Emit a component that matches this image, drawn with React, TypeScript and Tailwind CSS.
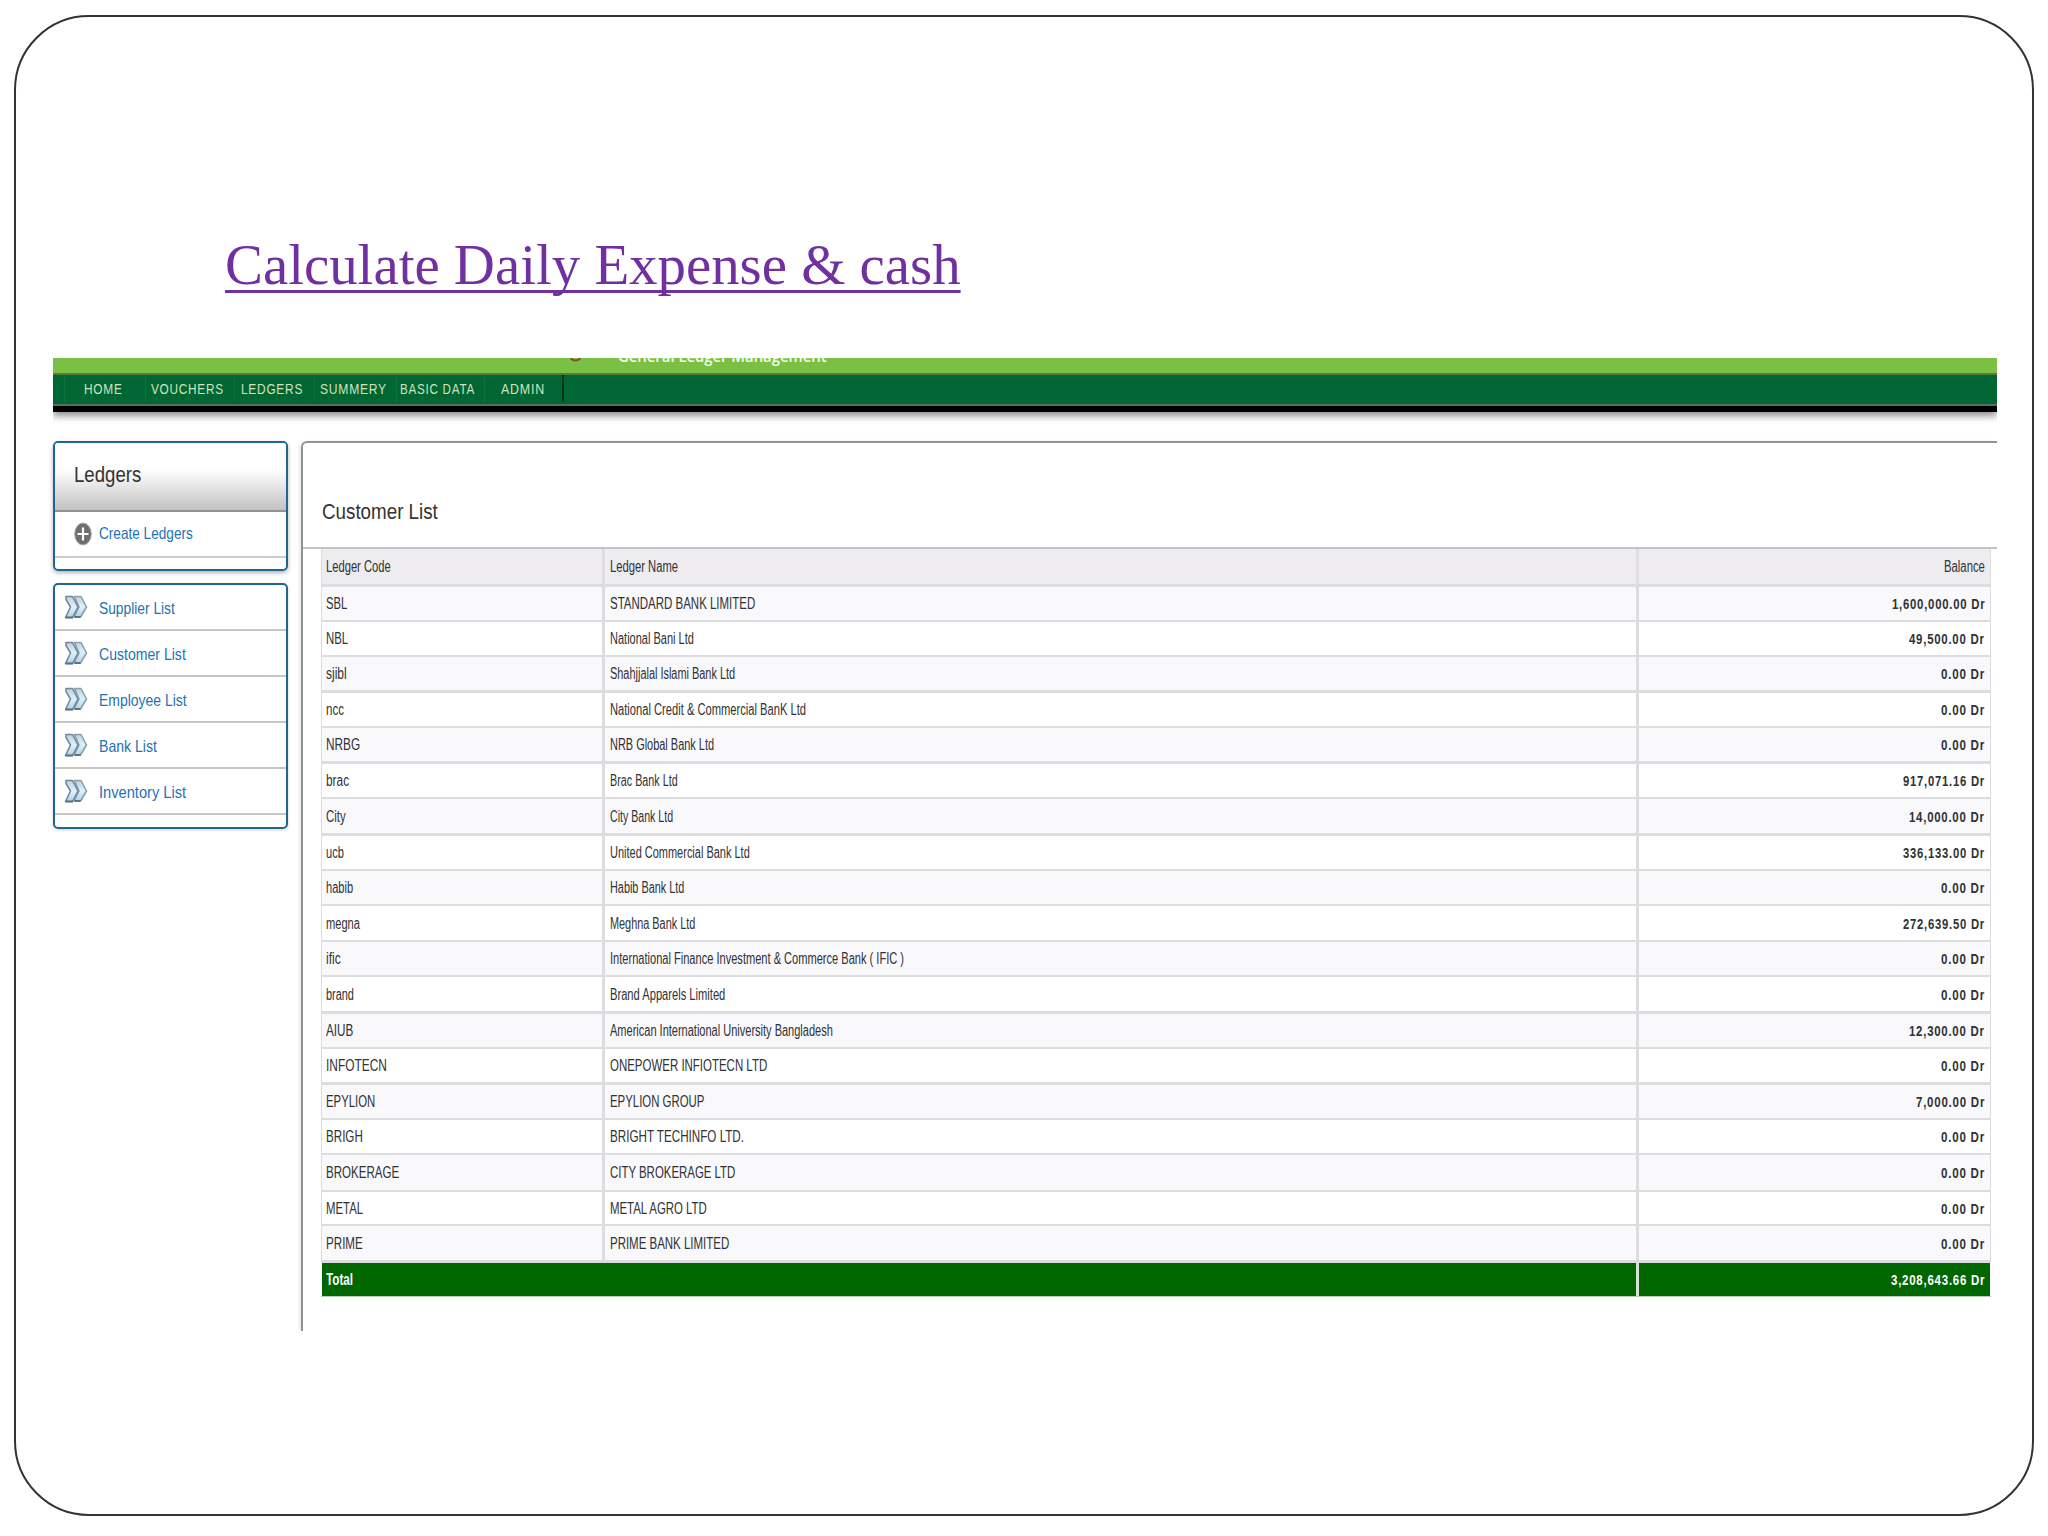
import { useLayoutEffect, useRef, useState } from 'react'
import type { ReactNode } from 'react'

const menu = [
    { label: 'HOME', width: 39, cell: 'w-[81px] pl-[19px]' },
    { label: 'VOUCHERS', width: 73, cell: 'w-[89px] pl-[5px]' },
    { label: 'LEDGERS', width: 62, cell: 'w-[80px] pl-[6px]' },
    { label: 'SUMMERY', width: 67, cell: 'w-[82px] pl-[5px]' },
    { label: 'BASIC DATA', width: 75, cell: 'w-[88px] pl-[3px]' },
    { label: 'ADMIN', width: 44, cell: 'w-[80px] pl-[16px]' },
]

const lists = [
    { label: 'Supplier List', width: 76 },
    { label: 'Customer List', width: 87 },
    { label: 'Employee List', width: 88 },
    { label: 'Bank List', width: 58 },
    { label: 'Inventory List', width: 87 },
]

type Cell = [string, number]

interface Ledger {
    code: Cell
    name: Cell
    balance: Cell
    row: string
}

const thin = 'h-[35px] border-b-2'
const thinTall = 'h-[36px] border-b-2'
const thick = 'h-[36px] border-b-3'
const thickTall = 'h-[37px] border-b-3'

const ledgers: Ledger[] = [
    { code: ['SBL', 21], name: ['STANDARD BANK LIMITED', 145], balance: ['1,600,000.00 Dr', 93], row: thin },
    { code: ['NBL', 22], name: ['National Bani Ltd', 84], balance: ['49,500.00 Dr', 76], row: thin },
    { code: ['sjibl', 21], name: ['Shahjjalal Islami Bank Ltd', 125], balance: ['0.00 Dr', 44], row: thick },
    { code: ['ncc', 18], name: ['National Credit & Commercial BanK Ltd', 196], balance: ['0.00 Dr', 44], row: thin },
    { code: ['NRBG', 34], name: ['NRB Global Bank Ltd', 104], balance: ['0.00 Dr', 44], row: thick },
    { code: ['brac', 23], name: ['Brac Bank Ltd', 68], balance: ['917,071.16 Dr', 82], row: thin },
    { code: ['City', 20], name: ['City Bank Ltd', 63], balance: ['14,000.00 Dr', 76], row: thickTall },
    { code: ['ucb', 18], name: ['United Commercial Bank Ltd', 140], balance: ['336,133.00 Dr', 82], row: thin },
    { code: ['habib', 27], name: ['Habib Bank Ltd', 74], balance: ['0.00 Dr', 44], row: thin },
    { code: ['megna', 34], name: ['Meghna Bank Ltd', 85], balance: ['272,639.50 Dr', 82], row: thinTall },
    { code: ['ific', 15], name: ['International Finance Investment & Commerce Bank ( IFIC )', 294], balance: ['0.00 Dr', 44], row: thin },
    { code: ['brand', 28], name: ['Brand Apparels Limited', 115], balance: ['0.00 Dr', 44], row: thickTall },
    { code: ['AIUB', 27], name: ['American International University Bangladesh', 223], balance: ['12,300.00 Dr', 76], row: thin },
    { code: ['INFOTECN', 61], name: ['ONEPOWER INFIOTECN LTD', 157], balance: ['0.00 Dr', 44], row: thick },
    { code: ['EPYLION', 49], name: ['EPYLION GROUP', 94], balance: ['7,000.00 Dr', 69], row: thin },
    { code: ['BRIGH', 37], name: ['BRIGHT TECHINFO LTD.', 134], balance: ['0.00 Dr', 44], row: thin },
    { code: ['BROKERAGE', 73], name: ['CITY BROKERAGE LTD', 125], balance: ['0.00 Dr', 44], row: 'h-[37px] border-b-2' },
    { code: ['METAL', 37], name: ['METAL AGRO LTD', 97], balance: ['0.00 Dr', 44], row: 'h-[34px] border-b-2' },
    { code: ['PRIME', 37], name: ['PRIME BANK LIMITED', 119], balance: ['0.00 Dr', 44], row: thickTall },
]

// Condenses a line of text so that it is exactly `width` pixels wide
function Fit({ width, className = '', children }: { width: number; className?: string; children: ReactNode }) {
    const ref = useRef<HTMLSpanElement>(null)
    const [scale, setScale] = useState(1)

    useLayoutEffect(() => {
        if (ref.current) setScale(width / ref.current.offsetWidth)
    }, [width])

    return (
        <span className="inline-block" style={{ width }}>
            <span
                ref={ref}
                className={`inline-block origin-left whitespace-nowrap ${className}`}
                style={{ transform: `scaleX(${scale})` }}
            >
                {children}
            </span>
        </span>
    )
}

function PlusIcon() {
    return (
        <svg className="w-[18px] h-[24px]" viewBox="0 0 18 24" preserveAspectRatio="none">
            <ellipse cx="9" cy="12" rx="8.3" ry="11" fill="#6f6f6f" stroke="#a9a9a9" />
            <path d="M9 5.5v13M3.5 12h11" stroke="#fff" strokeWidth="2.2" />
        </svg>
    )
}

function ArrowsIcon() {
    return (
        <svg className="w-[24px] h-[24px] -mt-[2px]" viewBox="0 0 24 24">
            <defs>
                <linearGradient id="arrow" x1="0" y1="0" x2="0" y2="1">
                    <stop offset="0" stopColor="#c3cfd8" />
                    <stop offset="0.5" stopColor="#dcf1fd" />
                    <stop offset="1" stopColor="#b0d3e8" />
                </linearGradient>
            </defs>
            <g fill="url(#arrow)" strokeWidth="1.6" strokeLinejoin="round">
                <path d="M10.5 1.5h6.500l5.500 10.500-6 10h-6.500l5-10z" stroke="#8b9fad" />
                <path d="M2 1.500h6.500l5.500 10.500-5.500 10.500h-7l5-10.500-4.500-7.500z" stroke="#74899a" />
            </g>
            <path d="M1.500 22.500h7.500M10.500 22h6" stroke="#5a7486" strokeWidth="1.800" />
        </svg>
    )
}

function Header() {
    return (
        <header className="w-full shadow-[0_4px_7px_#00000070] [clip-path:inset(0_0_-12px_0)]">
            <div className="flex h-[15px] overflow-hidden bg-[#7ac143]">
                <svg className="ml-[516px] w-[13px] h-[4px]" viewBox="0 0 13 4">
                    <path d="M1.5 -1c1 4.500 9 4.500 10 0" fill="none" stroke="#7b5535" strokeWidth="2" />
                </svg>
                <div className="ml-[36px] -mt-[14px] h-[24px] leading-[24px] text-[16px] font-semibold text-[#f4fbea] font-['Open_Sans',sans-serif]">
                    <Fit width={209}>General Ledger Management</Fit>
                </div>
            </div>
            <nav className="flex h-[33px] pl-[11px] pb-[2px] border-t-2 border-b-2 border-t-[#5b7748] border-b-[#52705e] bg-[#006633] text-[#d3e2bd]">
                {menu.map((item) => (
                    <a
                        key={item.label}
                        href="#"
                        className={`flex items-center shrink-0 border-l border-[#0b743d] text-[15.500px] leading-none tracking-[1px] first:ml-0 last:border-r-2 last:border-r-[#0b3316] ${item.cell}`}
                    >
                        <Fit width={item.width}>{item.label}</Fit>
                    </a>
                ))}
            </nav>
            <div className="h-[6px] bg-black" />
        </header>
    )
}

function Sidebar() {
    return (
        <aside className="w-[235px] shrink-0 text-[#2273b5] text-[16.500px] leading-none">
            <div className="h-[130px] rounded-[5px] border-2 border-[#1f6791] overflow-hidden shadow-[0_2px_4px_#0000004d]">
                <h2 className="flex items-center h-[69px] pl-[19px] pb-[2px] border-b-2 border-[#929292] bg-linear-to-b from-white from-40% to-[#c2c2c3] text-[22.500px] text-[#333]">
                    <Fit width={67}>Ledgers</Fit>
                </h2>
                <a href="#" className="flex items-center h-[46px] pl-[19px] pb-px border-b-2 border-[#cbcbcb]">
                    <PlusIcon />
                    <span className="ml-[7px]">
                        <Fit width={94}>Create Ledgers</Fit>
                    </span>
                </a>
            </div>
            <div className="mt-[12px] h-[246px] rounded-[5px] border-2 border-[#1f6791] overflow-hidden shadow-[0_1px_3px_#00000030]">
                {lists.map((item) => (
                    <a
                        key={item.label}
                        href="#"
                        className="flex items-center h-[46px] pl-[9px] pt-[2px] border-b-2 border-[#c6c6c6]"
                    >
                        <ArrowsIcon />
                        <span className="ml-[11px]">
                            <Fit width={item.width}>{item.label}</Fit>
                        </span>
                    </a>
                ))}
            </div>
        </aside>
    )
}

function Row({ ledger, striped }: { ledger: Ledger; striped: boolean }) {
    return (
        <div className={`flex border-[#dddcde] ${ledger.row} ${striped ? 'bg-[#f9f8fb]' : 'bg-white'}`}>
            <div className="flex items-center w-[283px] pl-[4px] pt-px border-r-3 border-[#dddcde]">
                <Fit width={ledger.code[1]}>{ledger.code[0]}</Fit>
            </div>
            <div className="flex items-center w-[1034px] pl-[5px] pt-px border-r-3 border-[#dddcde]">
                <Fit width={ledger.name[1]}>{ledger.name[0]}</Fit>
            </div>
            <div className="flex items-center justify-end flex-1 pr-[5px] text-[15px] font-bold tracking-[1px]">
                <Fit width={ledger.balance[1]}>{ledger.balance[0]}</Fit>
            </div>
        </div>
    )
}

function LedgerTable() {
    return (
        <div className="ml-[18px] w-[1670px] text-[16px] leading-none text-[#303236]">
            <div className="border-x border-[#dddcde]">
                <div className="flex h-[38px] border-b-3 border-[#dddcde] bg-[#eeecef]">
                    <div className="flex items-center w-[283px] pl-[4px] pt-px border-r-3 border-[#dddcde]">
                        <Fit width={65}>Ledger Code</Fit>
                    </div>
                    <div className="flex items-center w-[1034px] pl-[5px] pt-px border-r-3 border-[#dddcde]">
                        <Fit width={68}>Ledger Name</Fit>
                    </div>
                    <div className="flex items-center justify-end flex-1 pr-[5px] pt-px">
                        <Fit width={41}>Balance</Fit>
                    </div>
                </div>
                {ledgers.map((ledger, i) => (
                    <Row key={ledger.code[0]} ledger={ledger} striped={i % 2 === 0} />
                ))}
            </div>
            <div className="flex h-[34px] pl-px pr-px border-b border-[#b9cdb9] text-white font-bold">
                <div className="flex items-center w-[1317px] pl-[4px] border-r-3 border-[#d5e4d5] bg-[#006600]">
                    <Fit width={27}>Total</Fit>
                </div>
                <div className="flex items-center justify-end flex-1 pr-[5px] bg-[#006600] text-[15px] tracking-[1px]">
                    <Fit width={94}>3,208,643.66 Dr</Fit>
                </div>
            </div>
        </div>
    )
}

export default function App() {
    return (
        <div className="w-[2048px] h-[1536px] overflow-hidden bg-white pt-[15px] pl-[14px] font-['Liberation_Sans',sans-serif]">
            <main className="w-[2020px] h-[1501px] rounded-[75px] border-2 border-[#333]">
                <h1 className="mt-[220px] ml-[209px] h-[121px] text-[56px] leading-none text-[#7030a0] font-['Liberation_Serif',serif]">
                    <Fit
                        width={736}
                        className="underline decoration-[3px] underline-offset-[6px] [text-decoration-skip-ink:none]"
                    >
                        Calculate Daily Expense &amp; cash
                    </Fit>
                </h1>
                <div className="ml-[37px] w-[1944px]">
                    <Header />
                    <div className="flex mt-[29px]">
                        <Sidebar />
                        <section className="ml-[13px] flex-1 h-[890px] border-t-2 border-l-2 border-[#929292] rounded-tl-[6px] shadow-[-2px_0_3px_#00000014] [clip-path:inset(-4px_0_0_-6px)]">
                            <h2 className="flex h-[106px] pl-[19px] pt-[58px] border-b-2 border-[#c3c2c5] text-[22.500px] leading-none text-[#333]">
                                <Fit width={116}>Customer List</Fit>
                            </h2>
                            <LedgerTable />
                        </section>
                    </div>
                </div>
            </main>
        </div>
    )
}
